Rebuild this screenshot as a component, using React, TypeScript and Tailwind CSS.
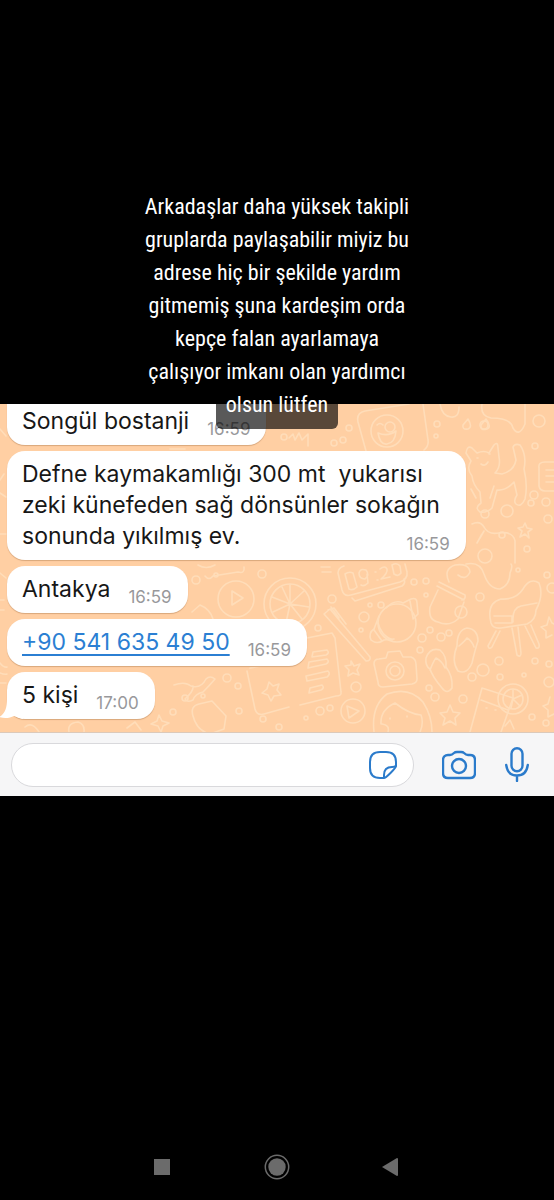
import React from 'react';

interface Message {
  lines: string[];
  time: string;
  phone?: boolean;
}

const messages: Message[] = [
  { lines: ['Songül bostanji'], time: '16:59' },
  {
    lines: [
      'Defne kaymakamlığı 300 mt  yukarısı',
      'zeki künefeden sağ dönsünler sokağın',
      'sonunda yıkılmış ev.',
    ],
    time: '16:59',
  },
  { lines: ['Antakya'], time: '16:59' },
  { lines: ['+90 541 635 49 50'], time: '16:59', phone: true },
  { lines: ['5 kişi'], time: '17:00' },
];

const captionLines = [
  'Arkadaşlar daha yüksek takipli',
  'gruplarda paylaşabilir miyiz bu',
  'adrese hiç bir şekilde yardım',
  'gitmemiş şuna kardeşim orda',
  'kepçe falan ayarlamaya',
  'çalışıyor imkanı olan yardımcı',
];

// Small bubbles scattered between the wallpaper drawings: x, y, radius
const dots: [number, number, number][] = [
  [539, 421, 6], [349, 428, 3], [343, 440, 3], [436, 436, 2], [437, 424, 3], [484, 425, 4],
  [284, 437, 3], [334, 443, 3], [535, 446, 3], [534, 495, 4], [531, 503, 3], [546, 502, 4],
  [507, 511, 6], [485, 514, 4], [502, 535, 3], [485, 556, 7], [527, 549, 3], [548, 519, 4],
  [196, 580, 4], [216, 575, 2], [262, 574, 4], [332, 599, 4], [370, 605, 2], [381, 605, 3],
  [364, 617, 5], [361, 630, 2], [414, 582, 3], [426, 581, 3], [426, 595, 2], [480, 597, 4],
  [547, 575, 3], [518, 570, 2], [552, 588, 5], [430, 630, 3], [422, 638, 4], [441, 637, 4],
  [449, 633, 3], [420, 650, 3], [499, 661, 4], [483, 670, 6], [472, 677, 4], [500, 677, 3],
  [524, 675, 2], [535, 661, 3], [549, 664, 3], [549, 682, 5], [356, 687, 5], [429, 688, 3],
  [435, 697, 4], [463, 699, 4], [320, 711, 4], [330, 708, 3], [306, 718, 2], [532, 717, 3],
  [546, 723, 3], [227, 678, 4], [238, 686, 3], [203, 696, 2], [239, 711, 3], [263, 719, 3],
  [173, 712, 3], [185, 698, 3], [318, 628, 3], [279, 727, 3],
];

function Wallpaper() {
  return (
    <svg
      className="absolute inset-0 h-full w-full"
      viewBox="0 404 554 328"
      preserveAspectRatio="xMidYMid slice"
      fill="none"
      stroke="#ffddb9"
      strokeWidth="1.6"
      strokeLinecap="round"
      strokeLinejoin="round"
      aria-hidden="true"
    >
      {dots.map(([x, y, r]) => (
        <circle key={`${x}-${y}`} cx={x} cy={y} r={r} />
      ))}

      {/* photo with a smiley */}
      <path d="M366 451 358 422Q356 413 365 411L409 404M423 404 428 440Q429 446 424 450" />
      <circle cx="387" cy="431" r="16" />
      <circle cx="390" cy="427" r="5" />
      <path d="M378 433q10 4 18-2q-1 12-9 13q-7 1-9-11M377 425q3-3 6 0" />
      <path d="M289 438l4-4 2 6 4-7 3 7 6-6v12" />

      {/* cable and drops along the top */}
      <path d="M440 404q2 12 11 13q8 1 8-10M482 404q-2 12 9 14q20 0 22 10q6 10 12-4V404" />
      <path d="M468 419q5 8 0 10q-6 1-5-4zM486 419q6 8 1 10q-7 2-6-4z" />

      {/* cat */}
      <path d="M466 453q1-8 6-5l5 5q7-3 12 0l5-8q4-4 4 3l1 9q2 10-4 16l7 1q12-3 14-14l-3-13q2-4 7-2q7 10 4 24q4 17 1 30q-4 9-9 5q-3-3 1-9l-3-13q-8 9-17 8l-5 18q-5 5-12 4q-6-4 1-9l-1-11q-7-7-8-16q-6-7-1-15z" />
      <path d="M477 458h1M489 454h1M481 464q4 3 7-2M471 489l5 9M494 486l-4 12" />
      <path d="M539 468q-1-6 6-6h9M539 468v18q1 5 6 5h9M546 470h8M546 476h8M546 482h8" />
      <path d="M472 524q8-4 12 3q4 8 15 6q14-2 16 8v22M480 538l4-7M477 543l5-9" />
      <path d="M525 523l2 5 5 1-4 3 1 6-4-4-5 3 2-6-4-3 5-1z" />

      {/* play badge and citrus slice */}
      <circle cx="236" cy="599" r="18" />
      <path d="M232 591v14l11-7z" />
      <circle cx="290" cy="604" r="26" />
      <circle cx="290" cy="604" r="20" />
      <path d="M290 604v-19M290 604l14-13M290 604l19 3M290 604l12 15M290 604l-4 19M290 604l-17 8M290 604l-18-7M290 604l-8-17" />
      <path d="M205 576q4 5 8 0l25-4q7 2 6-5M192 612l8-7q10 4 13 14" />

      {/* digital clock */}
      <path d="M344 566q-6 2-6 7l4 17q2 7 9 5l49-13q8-3 7-10l-2-8M352 598l3 3 47-15q4-3 2-7M321 567h9M322 572h9" />
      <path d="M345 574q4-3 8-1l4 14q-4 4-8 2zM359 573q1-5 7-3q4 5-1 9q-6 0-6-6zM367 574l1 9q-4 4-7 2M375 572h1M377 580h1M380 569q5-4 7 0q1 4-6 10l9-2M392 565q5-3 8 1l1 7q-3 4-7 1z" />

      {/* toothbrush */}
      <path d="M324 614l6-5 40 48q1 4-4 4zM328 610l6-2 12 16M331 607l8 11" />

      {/* sweet in a wrapper */}
      <circle cx="397" cy="623" r="19" />
      <path d="M386 608q9-9 17-5l8-4q6-2 6 4l1 11-5 5M410 601l3 17M379 616l-5 13q-6 4-3 11q6 5 13 0l10-1M378 623q3 12 14 17M374 630l8 11" />

      {/* jam jar */}
      <path d="M437 586l27 14M439 582l26 13q1 4-3 5M438 590l-8 17q-2 13 8 15q11 5 20-3l6-17" />
      <circle cx="461" cy="612" r="6" />
      <path d="M449 582q-6-13 6-17q14-2 15 7q-4 9-12 3M466 564q14-3 18 10q5 15 16 15q10-4 10-16q3-7 1-9" />

      {/* armchair */}
      <path d="M491 623q-5-20 10-24q15 1 22-10q7-12 16-6q5 12-3 27q0 10-9 14l-26 4q-8 1-10-5z" />
      <path d="M513 622q-1-14 8-16l16-3M494 616h18v7h-17M496 631l-8 15q1 4 4 1l8-16M512 628l5 27q4 3 4-2l-3-26M525 626l11 22q4 1 3-4l-8-19" />

      {/* notebook */}
      <path d="M307 638l25-5 3 5 6 54q1 4-5 4l-36 9M313 652l14-2q3 3-1 5l-14 2zM309 662l18-3q3 3-1 5l-18 4zM306 676l22-5q3 3-1 6l-20 4zM310 688l12-3q3 3-1 5l-12 3z" />

      {/* camera */}
      <path d="M374 664q0-5 5-5l7-1 2-6 12-1 3 6h8q5 2 5 7l1 15q0 4-5 5l-29 3q-5 0-5-5z" />
      <circle cx="395" cy="671" r="9" />
      <circle cx="395" cy="671" r="5" />

      {/* flip-flops */}
      <path d="M426 658q4-11 14-8q7 6 6 17q7 9 6 21q-5 7-10 0q-10-12-12-19q-5-3-4-11zM430 670q4-10 6-12q6 3 9 10M457 646q0-16 10-18q11 1 11 13q-3 9-6 22q-5 12-14 8q-7-10-1-25zM459 646q6-5 8-8q5 3 7 9" />
      <path d="M351 661l3 5 6-2-3 6 2 5-6-2-5 3 1-6-4-4 6-1z" />

      {/* head, badge, stars */}
      <circle cx="353" cy="711" r="12" />
      <path d="M347 706l12 5-10 7zM374 732q-3-26 13-38q22-8 36 8q9 14 9 30M381 724q-1-14 14-21q14 11 26 12q3 8-1 17M407 716v1M390 718v1M382 724q8 1 6 8" />
      <path d="M450 705l3 7 7 1-5 5 1 7-6-4-7 4 2-7-5-5 7-1z" />
      <path d="M549 617l3 6 2 1M549 617l-2 8-6 2 5 4v7l6-3M550 697l-2 7-5 2 5 4v7l6-3" />

      {/* drink with a slice */}
      <path d="M470 732l12-44 31 10-12 34M481 700l27 10M486 708h1M495 710h1" />
      <circle cx="513" cy="699" r="15" />
      <circle cx="513" cy="699" r="10" />
      <path d="M513 699v-9M513 699l9-4M513 699l7 7M513 699l-2 9M505 726l5-6 4 9" />

      {/* book and ribbon on the lower middle */}
      <path d="M247 671l8 38q2 7 9 5l25-7M250 668l48-9M269 682l4 4 6-2-2 6 4 5-7 1-3 5-3-6-6-2 5-4z" />
      <path d="M174 685q11-4 17 1q10 3 15-7q4-4 9 0q-5 6-12 13q-8 2-10 8q-6 3-8-1q9-8 8-13M193 716q-3-10 6-12l13-3 14 15-2 13-14 5q-13-3-17-18z" />
      <path d="M159 715l3 6 7 2-6 3-2 6-3-6-7-2 6-3zM0 663q4 5 7 4M0 673q5 2 7 1M0 683h6M25 727q7-6 14 5M69 732q-2-9 9-10q7 2 6 10M127 728l8-6 6 8" />
      <path d="M0 429l6 7M0 480l4-6M0 493l6 4M0 534h6M0 573l6 5M0 600h4M0 610h4M170 449h15M198 565q8 5 17 0" />
    </svg>
  );
}

function MessageBubble({ message, first, last }: { message: Message; first: boolean; last: boolean }) {
  const lead = message.lines.slice(0, -1);
  const tail = message.lines[message.lines.length - 1];

  return (
    <li
      className={`relative w-fit rounded-b-[18px] bg-white pr-4 pb-[6px] pl-[15px] shadow-[0_1px_1px_#d9a77b] ${
        first ? 'pt-[2px]' : 'rounded-t-[18px] pt-2'
      }`}
    >
      {last && (
        <svg className="absolute bottom-0 -left-2 h-5 w-6" viewBox="0 0 24 20" aria-hidden="true">
          <path d="M8 0c0 9-2 15-8 18 6 2 11 1 15-1l9 3V0z" fill="#fff" />
        </svg>
      )}
      {lead.map((line) => (
        <p key={line} className="relative pr-[10px] whitespace-pre">
          {line}
        </p>
      ))}
      <div className="relative flex items-end justify-between gap-[18px]">
        {message.phone ? (
          <a
            href="tel:+905416354950"
            className="mb-[2px] whitespace-pre text-[#2b7fd3] underline decoration-2 underline-offset-4"
          >
            {tail}
          </a>
        ) : (
          <p className="mb-[2px] whitespace-pre">{tail}</p>
        )}
        <time className="text-[17px] leading-5 text-[#98989b]">{message.time}</time>
      </div>
    </li>
  );
}

export default function App() {
  return (
    <div className="flex min-h-screen flex-col overflow-hidden bg-black font-['Inter','Noto_Sans',sans-serif]">
      <div className="relative z-10 -mb-[25px] flex flex-col items-center pt-[190px] text-center font-['Roboto_Condensed','Liberation_Sans_Narrow',sans-serif] text-[22px] leading-[33px] font-normal text-white">
        {captionLines.map((line) => (
          <p key={line}>{line}</p>
        ))}
        <p className="rounded-md bg-black/65 px-[10px] pb-2">olsun lütfen</p>
      </div>

      <main className="relative overflow-hidden bg-[#ffcfa3] pb-[13px]">
        <Wallpaper />
        <ul className="relative flex flex-col gap-[6px] pl-[7px] text-[23px] leading-[31px] text-[#171717]">
          {messages.map((message, i) => (
            <MessageBubble
              key={message.lines[0]}
              message={message}
              first={i === 0}
              last={i === messages.length - 1}
            />
          ))}
        </ul>
      </main>

      <form className="flex h-16 items-center border-t border-[#dcc9b9] bg-[#f6f6f7] pr-[25px] pl-[11px] text-[#2b7bcb]">
        <div className="flex h-11 min-w-0 flex-1 items-center rounded-full border border-[#d9d9dc] bg-white pr-4 pl-5">
          <input type="text" aria-label="Mesaj" className="min-w-0 flex-1 bg-transparent text-[23px] text-[#171717] outline-none" />
          <button type="button" aria-label="Çıkartma" className="shrink-0">
            <svg className="h-7 w-7" viewBox="0 0 28 28" fill="none" stroke="currentColor" strokeWidth="2" strokeLinejoin="round">
              <path d="M15 27h-4C4 27 1 24 1 17v-6C1 4 4 1 11 1h6c7 0 10 3 10 10v4c0 2-10 12-12 12z" />
              <path d="M15 27v-3c0-6 3-8 8-8 3 0 4-1 4-2" />
            </svg>
          </button>
        </div>
        <button type="button" aria-label="Kamera" className="ml-7 shrink-0">
          <svg className="h-[30px] w-[34px]" viewBox="0 0 34 30" fill="none" stroke="currentColor" strokeWidth="2.4" strokeLinejoin="round">
            <path d="M6 5h2c2 0 3-1 4-2 1-1 2-1 3-1h4c1 0 2 0 3 1 1 1 2 2 4 2h2c3 0 5 2 5 5v13c0 4-2 5-5 5H6c-3 0-5-1-5-5V10c0-3 2-5 5-5z" />
            <circle cx="17" cy="16" r="7" />
          </svg>
        </button>
        <button type="button" aria-label="Sesli mesaj" className="ml-[29px] shrink-0">
          <svg className="h-[35px] w-6" viewBox="0 0 24 35" fill="none" stroke="currentColor" strokeWidth="2.4" strokeLinecap="round">
            <rect x="6.5" y="1.2" width="11" height="23" rx="5.5" />
            <path d="M1.2 18c1 7 5 10.500 10.800 10.500S21.800 25 22.800 18M12 28.500V34" />
          </svg>
        </button>
      </form>

      <nav className="mt-auto flex items-center justify-center gap-[89px] pb-5">
        <button type="button" aria-label="Son uygulamalar">
          <svg className="h-[26px] w-[26px]" viewBox="0 0 26 26" fill="#6b6b6b">
            <rect x="5" y="5" width="16" height="16" />
          </svg>
        </button>
        <button type="button" aria-label="Ana ekran">
          <svg className="h-[26px] w-[26px]" viewBox="0 0 26 26" fill="#6b6b6b">
            <circle cx="13" cy="13" r="8.7" />
            <circle cx="13" cy="13" r="11.7" fill="none" stroke="#6b6b6b" strokeWidth="1.5" />
          </svg>
        </button>
        <button type="button" aria-label="Geri">
          <svg className="h-[26px] w-[26px]" viewBox="0 0 26 26" fill="#6b6b6b">
            <path d="M3 13 18 4q1 0 1 1v16q0 1-1 1z" />
          </svg>
        </button>
      </nav>
    </div>
  );
}
